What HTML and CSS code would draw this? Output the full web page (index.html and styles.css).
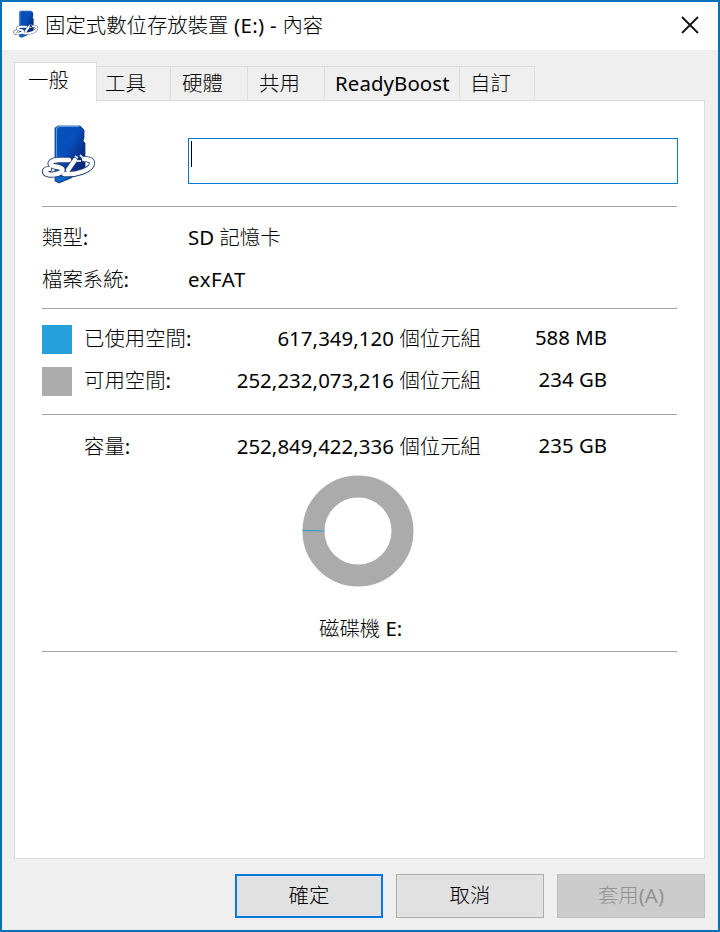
FILE: index.html
```html
<!DOCTYPE html>
<html lang="zh-Hant">
<head>
<meta charset="utf-8">
<title>固定式數位存放裝置 (E:) - 內容</title>
<link rel="stylesheet" href="styles.css">
</head>
<body>
<svg class="defs" aria-hidden="true">
  <defs>
    <linearGradient id="card" x1="0" y1="0" x2="1" y2="1">
      <stop offset="0" stop-color="#0750b8"/><stop offset=".4" stop-color="#064fbd"/><stop offset=".7" stop-color="#082f86"/><stop offset="1" stop-color="#04266b"/>
    </linearGradient>
    <symbol id="sd" viewBox="0 0 56 60">
      <path d="M14 4L17 2H39L43 6V14L42 17L44 19V44L30 54L18 59L14 57Z" fill="url(#card)" stroke="#1b3770" stroke-width=".8"/>
      <path d="M15.5 34V4.5L17.5 2.5H38" fill="none" stroke="#4e9bed" stroke-width="1.2"/>
      <path d="M15 52L30 53L18 58L14 56Z" fill="#0869c8"/>
      <path d="M28 36H18C10 36 7 40 12 42L19 43.5C24 45 21 49 15 50C11 51 3 51 4 47C4.500 46 6 45 8 45M23 50C36 51 51 46 51 39C51 36 47 35 43 35M34 36L27 46" fill="none" stroke="#263f76" stroke-width="6.200" stroke-linecap="round" stroke-linejoin="round"/>
      <path d="M28 36H18C10 36 7 40 12 42L19 43.5C24 45 21 49 15 50C11 51 3 51 4 47C4.500 46 6 45 8 45M23 50C36 51 51 46 51 39C51 36 47 35 43 35M34 36L27 46" fill="none" stroke="#fff" stroke-width="4.400" stroke-linecap="round" stroke-linejoin="round"/>
      <path d="M34 32L37 34M39 31L42 34M36 37H40" stroke="#cfdcf5" stroke-width="2"/>
    </symbol>
  </defs>
</svg>
<main class="window">
  <header class="titlebar">
    <svg class="title-icon"><use href="#sd"/></svg>
    <h1>固定式數位存放裝置<span class="latin title-latin"> (E:) - </span>內容</h1>
    <svg class="close" viewBox="0 0 18 18"><path d="M1 1L17 17M17 1L1 17"/></svg>
  </header>
  <nav class="tabs">
    <div class="tab active">一般</div>
    <div class="tab tools">工具</div>
    <div class="tab hardware">硬體</div>
    <div class="tab sharing">共用</div>
    <div class="tab boost latin">ReadyBoost</div>
    <div class="tab custom">自訂</div>
  </nav>
  <section class="panel">
    <div class="identity">
      <svg class="device-icon"><use href="#sd"/></svg>
      <div class="name-field"><span class="caret"></span></div>
    </div>
    <div class="details">
      <div class="row"><span>類型<b>:</b></span><span><b>SD </b>記憶卡</span></div>
      <div class="row"><span>檔案系統<b>:</b></span><span><b class="filesystem">exFAT</b></span></div>
    </div>
    <div class="usage">
      <div class="row"><i class="swatch used"></i><span>已使用空間<b>:</b></span><span class="bytes"><b>617,349,120 </b>個位元組</span><b class="size">588 MB</b></div>
      <div class="row"><i class="swatch free"></i><span>可用空間<b>:</b></span><span class="bytes"><b>252,232,073,216 </b>個位元組</span><b class="size">234 GB</b></div>
    </div>
    <div class="capacity">
      <div class="row"><i></i><span>容量<b>:</b></span><span class="bytes"><b>252,849,422,336 </b>個位元組</span><b class="size">235 GB</b></div>
      <svg class="donut" viewBox="0 0 112 112"><circle cx="56" cy="56" r="44.5"/><path d="M.5 55.3L22.5 56"/></svg>
      <div class="drive">磁碟機<b> E:</b></div>
    </div>
  </section>
  <footer class="actions">
    <div class="button primary">確定</div>
    <div class="button">取消</div>
    <div class="button disabled">套用<b>(A)</b></div>
  </footer>
</main>
</body>
</html>
```
FILE: styles.css
```css
* { box-sizing: border-box; }
body {
  margin: 0;
  font: 300 20.4px/30px "Noto Sans CJK TC", "Noto Sans", sans-serif;
  color: #000;
}
b, .latin { font-family: "Noto Sans", "Noto Sans CJK TC", sans-serif; font-weight: 400; }
b, span { white-space: pre; }
.defs { position: absolute; width: 0; height: 0; }
.window {
  width: 720px;
  height: 932px;
  border: 2px solid #0870b5;
  background: #efefef;
  display: flex;
  flex-direction: column;
}
.titlebar {
  height: 48px;
  flex: none;
  background: #fff;
  display: flex;
  align-items: center;
  padding: 0 19px 4px 10px;
}
.title-icon { width: 28px; height: 28px; margin-right: 5px; }
h1 { margin: 0; font: inherit; flex: 1; white-space: pre; }
.title-latin { letter-spacing: .3px; }
.close { width: 18px; height: 18px; fill: none; stroke: #111; stroke-width: 1.8; margin-top: 2px; }
.tabs {
  height: 51px;
  flex: none;
  padding: 12px 0 0 12px;
  display: flex;
  align-items: flex-end;
  position: relative;
  z-index: 1;
}
.tab {
  height: 35px;
  border: 1px solid #dcdcdc;
  border-left: 0;
  border-bottom: 0;
  line-height: 31px;
}
.active {
  width: 83px;
  height: 40px;
  border-left: 1px solid #dcdcdc;
  background: #fff;
  padding-left: 13px;
  margin-bottom: -1px;
  line-height: 33px;
}
.tools { width: 74px; padding-left: 8px; }
.hardware { width: 77px; padding-left: 11px; }
.sharing { width: 77px; padding-left: 11px; }
.boost { width: 135px; padding-left: 10px; line-height: 33px; letter-spacing: .1px; }
.custom { width: 75px; padding-left: 10px; }
.panel {
  width: 691px;
  height: 759px;
  flex: none;
  margin-left: 12px;
  margin-top: -1px;
  border: 1px solid #dcdcdc;
  background: #fff;
  padding: 0 27px;
}
.identity { height: 106px; display: flex; border-bottom: 1px solid #a2a2a2; }
.device-icon { width: 56px; height: 60px; margin: 23px 91px 0 -1px; flex: none; }
.name-field {
  width: 490px;
  height: 46px;
  flex: none;
  margin-top: 37px;
  border: 1px solid #0878d7;
  padding: 2px;
}
.caret { display: block; width: 1px; height: 26px; background: #000; }
.row { display: grid; align-items: center; height: 42px; }
.row > span, .row > b { position: relative; top: -2px; }
.details { height: 102px; padding-top: 10px; border-bottom: 1px solid #a2a2a2; }
.details .row { grid-template-columns: 146px 1fr; }
.filesystem { letter-spacing: .6px; }
.usage { height: 106px; padding-top: 9px; border-bottom: 1px solid #a2a2a2; }
.usage .row, .capacity .row { grid-template-columns: 42px 111px 286px 126px; }
.swatch { width: 30px; height: 29px; }
.used { background: #26a0da; }
.free { background: #acacac; }
.bytes, .size { text-align: right; }
.bytes b { letter-spacing: .07px; }
.capacity {
  height: 237px;
  padding-top: 11px;
  border-bottom: 1px solid #a2a2a2;
  display: flex;
  flex-direction: column;
}
.donut { width: 112px; height: 112px; margin: 7px 0 0 259.5px; flex: none; fill: none; stroke: #ababab; stroke-width: 22px; }
.donut path { stroke: #389bcb; stroke-width: 1.2px; }
.drive { margin: 25px 0 0 277px; white-space: pre; }
.actions { display: flex; gap: 13px; margin: 15px 0 0 233px; }
.button {
  width: 148px;
  height: 44px;
  border: 1px solid #adadad;
  background: #e1e1e1;
  text-align: center;
  line-height: 39px;
}
.primary { border: 2px solid #0878df; line-height: 37px; }
.disabled { background: #ccc; border-color: #bfbfbf; color: #929292; }
```
